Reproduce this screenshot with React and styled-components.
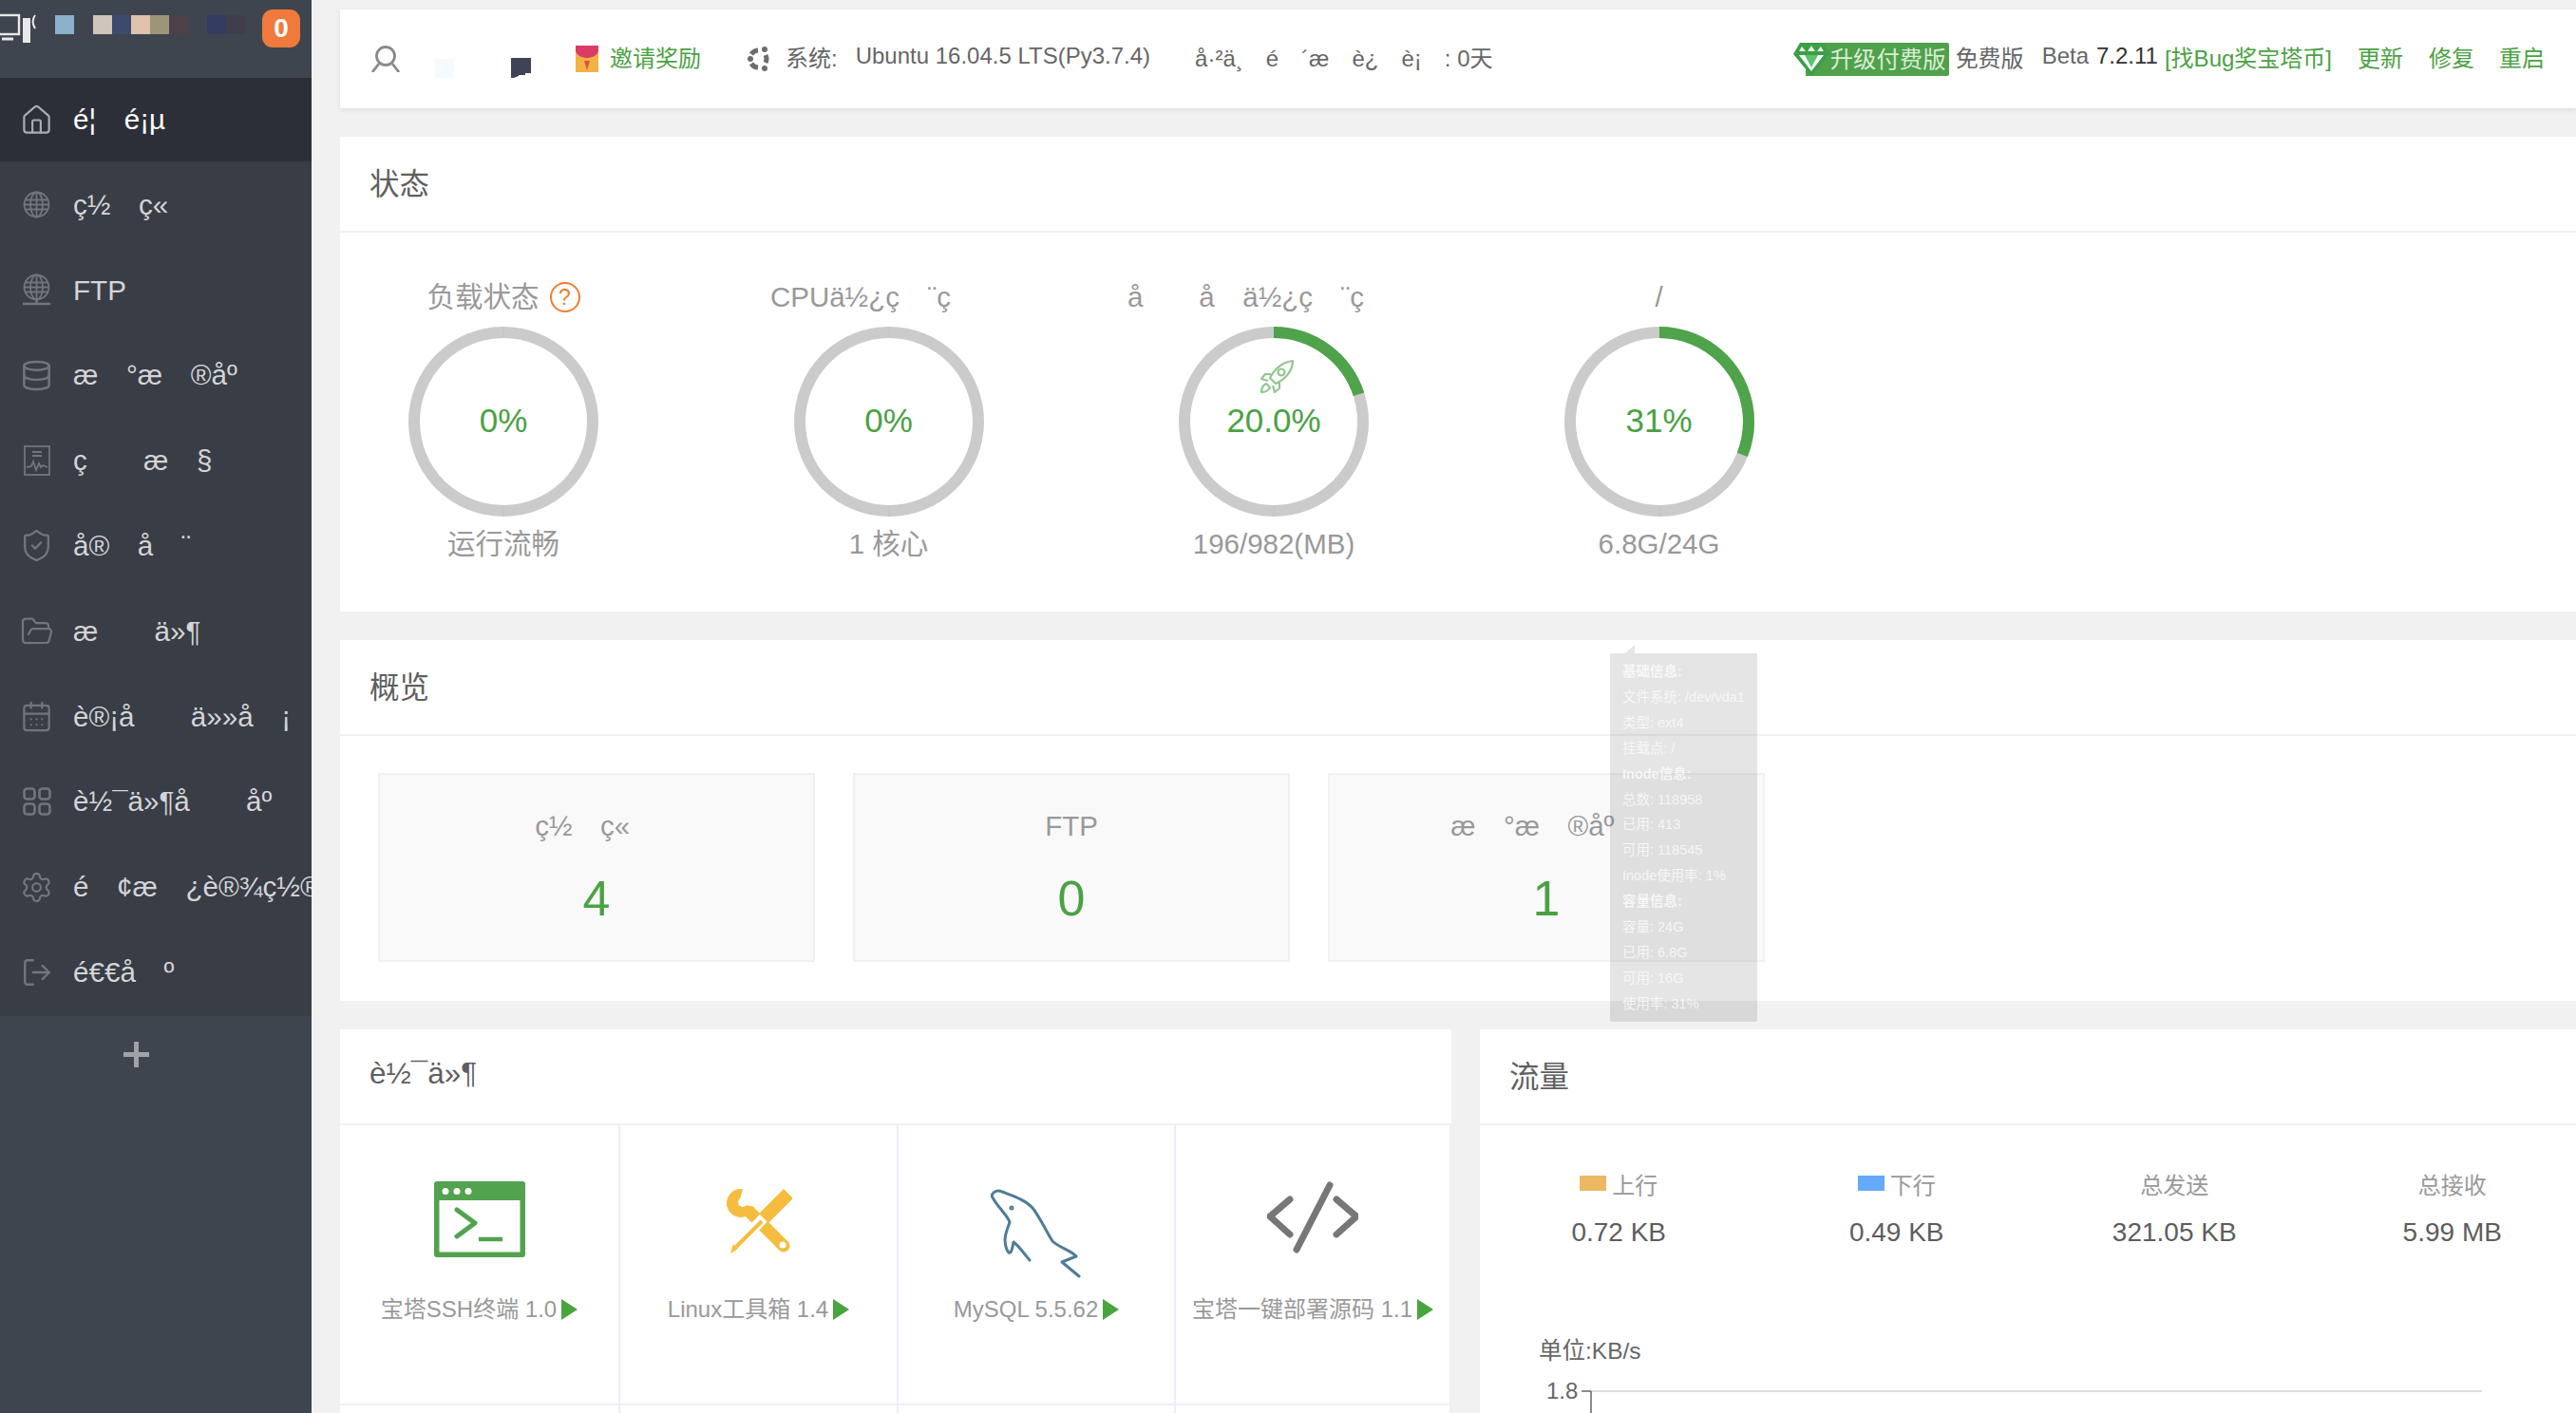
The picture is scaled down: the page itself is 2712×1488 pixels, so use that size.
import React from "react";
import styled, { createGlobalStyle } from "styled-components";
import { House, Database, ShieldCheck, FolderOpen, CalendarDays, Settings, LogOut } from "lucide-react";

const GlobalStyle = createGlobalStyle`
  html, body { margin: 0; padding: 0; width: 2712px; height: 1488px; overflow: hidden; background: #f1f1f1; }
  body { font-family: "Liberation Sans", "Noto Sans CJK SC", sans-serif; color: #666; }
  * { box-sizing: border-box; }
`;

const GREEN = "#4ba144";
const Page = styled.div`position: relative; display: flex; width: 2712px; height: 1488px; overflow: hidden;`;

/* sidebar */
const Sidebar = styled.aside`width: 328px; flex-shrink: 0; background: #383d46; display: flex; flex-direction: column; overflow: hidden;`;
const LogoBar = styled.div`height: 82px; background: #3f454e; display: flex; align-items: flex-start; position: relative;`;
const LogoSvg = styled.svg`width: 40px; height: 32px; margin-top: 14px; flex-shrink: 0;`;
const BlurRow = styled.div`display: flex; margin: 16px 0 0 18px; height: 20px;`;
const BlurCell = styled.span`width: 20px; height: 20px; background: ${p => p.$c};`;
const Badge = styled.span`
  position: absolute; left: 276px; top: 10px; width: 40px; height: 40px; border-radius: 11px;
  background: #ef7a3b; color: #fff; font-weight: 700; font-size: 28px;
  display: flex; align-items: center; justify-content: center;
`;
const MenuItem = styled.div`
  height: 88px; margin-bottom: 1.8px; display: flex; align-items: center; padding-left: 24px; white-space: nowrap;
  font-size: 29.6px; color: ${p => (p.$active ? "#fff" : "#d4d5d7")};
  background: ${p => (p.$active ? "#2c2f38" : "transparent")};
`;
const MenuIcon = styled.span`
  width: 29px; height: 30px; margin-right: 24px; flex-shrink: 0; display: flex; align-items: center; justify-content: center;
  color: ${p => (p.$active ? "#a9acb0" : "#71767c")};
  svg { flex-shrink: 0; }
`;
const AddRow = styled.div`flex: 1; background: #3f454e; display: flex; justify-content: center; padding-top: 27px;`;
const PlusMark = styled.span`
  position: relative; width: 27px; height: 27px; margin-right: 42px;
  &::before, &::after { content: ""; position: absolute; background: #a0a3a6; }
  &::before { left: 0; right: 0; top: 11px; height: 5px; }
  &::after { top: 0; bottom: 0; left: 11px; width: 5px; }
`;

/* main */
const Main = styled.main`flex: 1; min-width: 0; padding: 10px 0 0 30px; overflow: hidden;`;
const TopBar = styled.header`
  height: 104px; margin-bottom: 30px; background: #fff; box-shadow: 0 2px 5px rgba(0,0,0,.08);
  display: flex; align-items: center; justify-content: space-between; padding: 0 33px 0 32px;
  font-size: 24px; white-space: nowrap;
`;
const BarGroup = styled.div`display: flex; align-items: center;`;
const BarText = styled.span`margin: 0 0 6px ${p => p.$ml || 0}px; color: ${p => p.$c || "#666"};`;
const BarSvg = styled.svg`display: block; margin-left: ${p => p.$ml || 0}px; flex-shrink: 0;`;
const BlurSquare = styled.span`width: 20px; height: 20px; margin: 0 0 0 36px; background: #f5fbff; align-self: flex-end; transform: translateY(-1px);`;
const BlurTab = styled(BarSvg)`align-self: flex-end; transform: translateY(-1px);`;
const UpgradeBadge = styled.span`
  position: relative; display: block; width: 151px; height: 35px; margin-left: 13px; background: #4fa14b; border-radius: 0 2px 2px 0;
  color: #d9ecd6; font-size: 24.4px; line-height: 36px; padding-left: 26px;
`;
const Gem = styled.svg`position: absolute; left: -13px; top: -1px;`;

const Card = styled.section`background: #fff; margin-bottom: ${p => p.$mb ?? 30}px; height: ${p => p.$h}px; overflow: hidden;`;
const CardTitle = styled.div`
  height: 101px; padding: 0 0 6px 31px; display: flex; align-items: center; border-bottom: 2px solid #f1f1f1;
  font-size: 31.5px; color: #5f5f5f; white-space: nowrap;
`;

const Gauges = styled.div`display: flex; gap: 61.5px; padding-top: 50px;`;
const Gauge = styled.div`width: 344px; display: flex; flex-direction: column; align-items: center; color: #999; font-size: 29.5px; white-space: nowrap;`;
const GaugeLabel = styled.div`height: 36px; line-height: 36px; display: flex; align-items: center;`;
const Help = styled.span`
  width: 32px; height: 32px; margin-left: 11px; border: 2px solid #ef7d31; border-radius: 50%; color: #ef7d31;
  font-size: 23px; display: flex; align-items: center; justify-content: center;
`;
const RingWrap = styled.div`position: relative; width: 200px; height: 200px; margin: 13px 0 11px;`;
const RingValue = styled.div`
  position: absolute; left: 0; right: 0; top: 81px; text-align: center; line-height: 36px;
  font-size: 35px; color: ${GREEN};
`;
const RocketMark = styled.svg`position: absolute; left: 85px; top: 34px; opacity: .6;`;

const Stats = styled.div`display: flex; gap: 40px; padding: 39px 0 0 40px;`;
const StatBox = styled.div`
  width: 460px; height: 199px; flex-shrink: 0; background: #f9f9f9; border: 2px solid #f1f1f1;
  display: flex; flex-direction: column; align-items: center; padding-top: 36px; white-space: nowrap;
`;
const StatLabel = styled.div`font-size: 29.5px; line-height: 36px; color: #999;`;
const StatValue = styled.div`font-size: 52px; line-height: 60px; margin-top: 28px; color: ${GREEN};`;

const BottomRow = styled.div`display: flex; gap: 30px;`;
const SoftCard = styled(Card)`width: 1170px; flex-shrink: 0; height: 404px;`;
const TrafficCard = styled(Card)`width: 1170px; flex-shrink: 0; height: 404px;`;
const SoftGrid = styled.div`display: grid; grid-template-columns: 295px 293px 292px 290px;`;
const SoftCell = styled.div`
  height: 295px; padding-top: 59px; border-right: 2px solid #eeeefb; border-bottom: 2px solid #eeeefb;
  display: flex; flex-direction: column; align-items: center;
`;
const SoftIcon = styled.div`height: 120px; display: flex; align-items: flex-start; justify-content: center;`;
const IconSvg = styled.svg`margin-top: ${p => p.$top || 0}px; display: block;`;
const SoftName = styled.div`display: flex; align-items: center; font-size: 24px; line-height: 30px; color: #999; white-space: nowrap;`;
const PlayMark = styled.span`
  width: 0; height: 0; margin-left: 5px; border-left: 17px solid #48a53e;
  border-top: 11px solid transparent; border-bottom: 11px solid transparent;
`;

const FlowRow = styled.div`display: grid; grid-template-columns: repeat(4, 292.5px); padding-top: 46px;`;
const FlowCol = styled.div`display: flex; flex-direction: column; align-items: center; white-space: nowrap;`;
const FlowLabel = styled.div`display: flex; align-items: center; height: 30px; font-size: 24px; color: #999;`;
const Swatch = styled.span`width: 28px; height: 16px; margin-right: 6px; background: ${p => p.$c};`;
const FlowValue = styled.div`margin-top: 20px; font-size: 28px; line-height: 34px; color: #5d5d5d;`;
const ChartUnit = styled.div`margin: 93px 0 0 62px; font-size: 24.5px; line-height: 30px; color: #666;`;
const ChartSvg = styled.svg`display: block; margin-left: 62px;`;
const ChartText = styled.text`font-size: 24px; fill: #666; font-family: "Liberation Sans", sans-serif;`;

const Tip = styled.div`
  position: absolute; left: 1695px; top: 688px; width: 155px; height: 388px; padding: 6px 0 0 13px;
  background: rgba(0,0,0,.1); border-radius: 2px; font-size: 14.5px; line-height: 26.9px; color: rgba(255,255,255,.72); white-space: nowrap;
  &::before {
    content: ""; position: absolute; left: 16px; top: -9px; width: 0; height: 0;
    border-left: 10px solid transparent; border-bottom: 9px solid rgba(0,0,0,.1);
  }
`;
const TipLine = styled.div`font-weight: ${p => (p.$head ? 700 : 400)};`;

/* drawings */
const GlobeIcon = ({ base }) => (
  <svg width="29" height={base ? 36 : 30} viewBox={base ? "0 0 29 36" : "0 0 29 30"} fill="none" stroke="currentColor" strokeWidth="1.8">
    <circle cx="14.5" cy="14.5" r="13" />
    <ellipse cx="14.5" cy="14.5" rx="6.5" ry="13" />
    <path d="M14.5 1.5v26M2.5 9.5h24M1.5 14.5h26M2.5 19.5h24" />
    {base && <path d="M0 32h29M14.5 28v4" strokeWidth="2.6" />}
  </svg>
);
const MonitorIcon = () => (
  <svg width="28" height="32" viewBox="0 0 28 32" fill="none" stroke="currentColor" strokeWidth="1.8">
    <rect x="1" y="1" width="26" height="30" />
    <path d="M9 7h10M9 11h10" />
    <path d="M3 23l5-1 2-5 3 9 3-7 2 4 2-2 5 2" />
  </svg>
);
const AppsIcon = () => (
  <svg width="30" height="30" viewBox="0 0 30 30" fill="none" stroke="currentColor" strokeWidth="2.6">
    <rect x="1.5" y="1.5" width="11" height="11" rx="3" />
    <rect x="17.5" y="1.5" width="11" height="11" rx="3" />
    <rect x="1.5" y="17.5" width="11" height="11" rx="3" />
    <rect x="17.5" y="17.5" width="11" height="11" rx="3" />
  </svg>
);

const Ring = ({ pct }) => {
  const r = 94;
  const len = 2 * Math.PI * r;
  return (
    <svg width="200" height="200" viewBox="0 0 200 200">
      <circle cx="100" cy="100" r={r} fill="none" stroke="#cbcbcb" strokeWidth="12" />
      <circle cx="100" cy="100" r={r} fill="none" stroke="#4fa34a" strokeWidth="12"
        strokeDasharray={`${(len * pct) / 100} ${len}`} transform="rotate(-90 100 100)" />
      <path d="M100 188v12" stroke="#bcc8bc" strokeWidth="1" />
      {pct === 0 && <path d="M100 0v12" stroke="#bcc8bc" strokeWidth="1" />}
    </svg>
  );
};

const RocketIcon = () => (
  <RocketMark width="37" height="37" viewBox="0 0 37 37" fill="none" stroke="#4ba144" strokeWidth="2.2" strokeLinejoin="round">
    <path d="M35 2C25 3 16 10 11 20l6 6c11-5 18-14 18-24z" />
    <circle cx="23" cy="14" r="3.500" />
    <path d="M12 16l-6 0-4 5 7 2M21 25l0 6-5 4-2-7" />
    <path d="M7 26c-4 2-5 6-5 9 4 0 8-2 9-5z" />
  </RocketMark>
);

const TerminalIcon = () => (
  <IconSvg width="96" height="80" viewBox="0 0 96 80">
    <rect width="96" height="80" rx="3" fill="#52a24e" />
    <rect x="5.5" y="20" width="85" height="54.500" fill="#fff" />
    <circle cx="12" cy="10.500" r="3.500" fill="#fff" />
    <circle cx="24" cy="10.500" r="3.500" fill="#fff" />
    <circle cx="36" cy="10.500" r="3.500" fill="#fff" />
    <path d="M24 30l19 14-19 14" fill="none" stroke="#52a24e" strokeWidth="5" strokeLinecap="round" strokeLinejoin="round" />
    <path d="M47 61h25" stroke="#52a24e" strokeWidth="4.500" />
  </IconSvg>
);
const ToolsIcon = () => (
  <IconSvg $top={6} width="70" height="72" viewBox="0 0 70 72">
    <path d="M24 25l37 37" stroke="#f5bd3f" strokeWidth="13" strokeLinecap="round" />
    <circle cx="16" cy="17" r="15" fill="#f5bd3f" />
    <path d="M14 17L19 -2 40 0 34 22z" fill="#fff" />
    <circle cx="18" cy="16" r="5" fill="#fff" />
    <circle cx="60" cy="61" r="3.500" fill="#fff" />
    <path d="M6 69L44 28" stroke="#fff" strokeWidth="11" />
    <path d="M40 33L66 7" stroke="#f5bd3f" strokeWidth="14" />
    <path d="M36 32l6 6" stroke="#fff" strokeWidth="2" />
    <path d="M38 36L11 63" stroke="#f5bd3f" strokeWidth="4" />
    <path d="M5 70l3-10 5 5z" fill="#f5bd3f" />
  </IconSvg>
);
const DolphinIcon = () => (
  <IconSvg $top={8} width="96" height="96" viewBox="0 0 96 96" fill="none" stroke="#4f7c97" strokeWidth="3" strokeLinejoin="round" strokeLinecap="round">
    <path d="M1 7C3 2 8 1 12 3C25 8 37 12 44 20C52 30 58 44 65 55C72 62 84 64 90 71L75 77L93 92" />
    <path d="M1 7C6 18 18 28 20 35C18 42 12 52 17 64C20 70 22 68 24 56C32 62 36 70 41 75" />
    <circle cx="22" cy="20" r="1" />
  </IconSvg>
);
const CodeIcon = () => (
  <IconSvg width="96" height="76" viewBox="0 0 96 76" fill="none" stroke="#777" strokeWidth="7" strokeLinecap="round" strokeLinejoin="round">
    <path d="M24 19L3 37l21 19M73 19l21 18-21 19M66 4L31 72" />
  </IconSvg>
);

const menu = [
  { icon: <House size={35} strokeWidth={1.5} />, text: "é¦\u2003é¡µ" },
  { icon: <GlobeIcon />, text: "ç½\u2003ç«" },
  { icon: <GlobeIcon base />, text: "FTP" },
  { icon: <Database size={35} strokeWidth={1.7} />, text: "æ\u2003°æ\u2003®åº\u2003" },
  { icon: <MonitorIcon />, text: "ç\u2003\u2003æ\u2003§" },
  { icon: <ShieldCheck size={37} strokeWidth={1.5} />, text: "å®\u2003å\u2003¨" },
  { icon: <FolderOpen size={36} strokeWidth={1.5} />, text: "æ\u2003\u2003ä»¶" },
  { icon: <CalendarDays size={35} strokeWidth={1.5} />, text: "è®¡å\u2003\u2003ä»»å\u2003¡" },
  { icon: <AppsIcon />, text: "è½¯ä»¶å\u2003\u2003åº\u2003" },
  { icon: <Settings size={35} strokeWidth={1.5} />, text: "é\u2003¢æ\u2003¿è®¾ç½®" },
  { icon: <LogOut size={34} strokeWidth={1.7} />, text: "é€€å\u2003º" },
];

const blurCells = ["#8ab0cc", "transparent", "#cfc5bb", "#3d4a6e", "#dfc3ad", "#9c9579", "#4d4148", "transparent", "#343c62", "#403e4b"];

const gauges = [
  { title: "负载状态", help: true, pct: 0, value: "0%", sub: "运行流畅" },
  { title: "CPUä½¿ç\u2003¨ç\u2003\u2003", pct: 0, value: "0%", sub: "1 核心" },
  { title: "å\u2003\u2003å\u2003ä½¿ç\u2003¨ç\u2003\u2003", pct: 20, value: "20.0%", sub: "196/982(MB)", rocket: true },
  { title: "/", pct: 31, value: "31%", sub: "6.8G/24G" },
];

const overview = [
  { label: "ç½\u2003ç«\u2003", value: 4 },
  { label: "FTP", value: 0 },
  { label: "æ\u2003°æ\u2003®åº\u2003", value: 1 },
];

const software = [
  { icon: <TerminalIcon />, name: "宝塔SSH终端 1.0" },
  { icon: <ToolsIcon />, name: "Linux工具箱 1.4" },
  { icon: <DolphinIcon />, name: "MySQL 5.5.62" },
  { icon: <CodeIcon />, name: "宝塔一键部署源码 1.1" },
];

const flow = [
  { label: "上行", color: "#edb863", value: "0.72 KB" },
  { label: "下行", color: "#66a8fa", value: "0.49 KB" },
  { label: "总发送", value: "321.05 KB" },
  { label: "总接收", value: "5.99 MB" },
];

const tipLines = [
  { t: "基础信息:", head: true },
  { t: "文件系统: /dev/vda1" },
  { t: "类型: ext4" },
  { t: "挂载点: /" },
  { t: "Inode信息:", head: true },
  { t: "总数: 118958" },
  { t: "已用: 413" },
  { t: "可用: 118545" },
  { t: "Inode使用率: 1%" },
  { t: "容量信息:", head: true },
  { t: "容量: 24G" },
  { t: "已用: 6.8G" },
  { t: "可用: 16G" },
  { t: "使用率: 31%" },
];

export default function App() {
  return (
    <Page>
      <GlobalStyle />
      <Sidebar>
        <LogoBar>
          <LogoSvg viewBox="0 0 40 32" fill="none" stroke="#e8e8e8" strokeWidth="2.4">
            <rect x="-3" y="2" width="23" height="20" />
            <path d="M2 27h12" strokeWidth="3" />
            <rect x="24" y="5" width="8" height="26" fill="#e8e8e8" stroke="none" />
            <path d="M37 2c-3 4-3 9 0 14" strokeWidth="2" />
          </LogoSvg>
          <BlurRow>
            {blurCells.map((c, i) => <BlurCell key={i} $c={c} />)}
          </BlurRow>
          <Badge>0</Badge>
        </LogoBar>
        {menu.map((m, i) => (
          <MenuItem key={i} $active={i === 0}>
            <MenuIcon $active={i === 0}>{m.icon}</MenuIcon>
            {m.text}
          </MenuItem>
        ))}
        <AddRow><PlusMark /></AddRow>
      </Sidebar>

      <Main>
        <TopBar>
          <BarGroup>
            <BarSvg width="32" height="28" viewBox="0 0 32 28" fill="none" stroke="#8a8a8a" strokeWidth="2.8">
              <circle cx="16" cy="11" r="9.500" />
              <path d="M9 19L2 28M23 19l7 9" />
            </BarSvg>
            <BlurSquare />
            <BlurTab $ml={60} width="21" height="21" viewBox="0 0 21 21">
              <path d="M0 0h21v16h-6v2H8v1L3 21H0z" fill="#404258" />
            </BlurTab>
            <BarSvg $ml={47} width="24" height="28" viewBox="0 0 24 28">
              <rect width="24" height="28" fill="#f2b344" />
              <path d="M0 0h24v6C22 11 17 13 12 13S2 11 0 6z" fill="#dc3b68" />
              <path d="M9 16h6l-3 10z" fill="#e0523f" />
            </BarSvg>
            <BarText $ml={12} $c={GREEN}>邀请奖励</BarText>
            <BarSvg $ml={48} width="26" height="28" viewBox="0 0 26 28" fill="none" stroke="#6c6c6c" strokeWidth="5">
              <path d="M12 5a9 9 0 0 0-7 4M5 19a9 9 0 0 0 7 4M20 18a9 9 0 0 0 0-8" />
              <circle cx="4" cy="14" r="3" fill="#6c6c6c" stroke="none" />
              <circle cx="19" cy="4" r="3" fill="#6c6c6c" stroke="none" />
              <circle cx="19" cy="24" r="3" fill="#6c6c6c" stroke="none" />
            </BarSvg>
            <BarText $ml={15}>系统:</BarText>
            <BarText $ml={19}>Ubuntu 16.04.5 LTS(Py3.7.4)</BarText>
            <BarText $ml={47}>å·²ä¸{"\u2003"}é{"\u2003"}´æ{"\u2003"}è¿{"\u2003"}è¡{"\u2003"}: 0天</BarText>
          </BarGroup>
          <BarGroup>
            <UpgradeBadge>
              <Gem width="38" height="37" viewBox="0 0 38 37">
                <path d="M7 1h24l7 12-19 23L0 13z" fill="#3d9f49" />
                <path d="M9 5l4 5H6zM19 4l4 6h-8zM29 5l3 5h-7z" fill="#e6f5e4" />
                <path d="M6 14h26L19 31z" fill="#fff" />
                <path d="M12 14h14l-7 13z" fill="#5cc46a" />
              </Gem>
              升级付费版
            </UpgradeBadge>
            <BarText $ml={7}>免费版</BarText>
            <BarText $ml={19}>Beta</BarText>
            <BarText $ml={8} $c="#333">7.2.11</BarText>
            <BarText $ml={7} $c={GREEN}>[找Bug奖宝塔币]</BarText>
            <BarText $ml={27} $c={GREEN}>更新</BarText>
            <BarText $ml={27} $c={GREEN}>修复</BarText>
            <BarText $ml={26} $c={GREEN}>重启</BarText>
          </BarGroup>
        </TopBar>

        <Card $h={500}>
          <CardTitle>状态</CardTitle>
          <Gauges>
            {gauges.map((g, i) => (
              <Gauge key={i}>
                <GaugeLabel>{g.title}{g.help && <Help>?</Help>}</GaugeLabel>
                <RingWrap>
                  <Ring pct={g.pct} />
                  {g.rocket && <RocketIcon />}
                  <RingValue>{g.value}</RingValue>
                </RingWrap>
                <GaugeLabel>{g.sub}</GaugeLabel>
              </Gauge>
            ))}
          </Gauges>
        </Card>

        <Card $h={380}>
          <CardTitle>概览</CardTitle>
          <Stats>
            {overview.map((o, i) => (
              <StatBox key={i}>
                <StatLabel>{o.label}</StatLabel>
                <StatValue>{o.value}</StatValue>
              </StatBox>
            ))}
          </Stats>
        </Card>

        <BottomRow>
          <SoftCard $mb={0}>
            <CardTitle>è½¯ä»¶</CardTitle>
            <SoftGrid>
              {software.map((s, i) => (
                <SoftCell key={i}>
                  <SoftIcon>{s.icon}</SoftIcon>
                  <SoftName>{s.name}<PlayMark /></SoftName>
                </SoftCell>
              ))}
              {software.map((s, i) => <SoftCell key={i} />)}
            </SoftGrid>
          </SoftCard>
          <TrafficCard $mb={0}>
            <CardTitle>流量</CardTitle>
            <FlowRow>
              {flow.map((f, i) => (
                <FlowCol key={i}>
                  <FlowLabel>{f.color && <Swatch $c={f.color} />}{f.label}</FlowLabel>
                  <FlowValue>{f.value}</FlowValue>
                </FlowCol>
              ))}
            </FlowRow>
            <ChartUnit>单位:KB/s</ChartUnit>
            <ChartSvg width="1000" height="60" viewBox="0 0 1000 60">
              <ChartText x="8" y="35">1.8</ChartText>
              <path d="M55 27h938" stroke="#ddd" strokeWidth="2" />
              <path d="M45 27h10M55 27v33" stroke="#666" strokeWidth="1.500" fill="none" />
            </ChartSvg>
          </TrafficCard>
        </BottomRow>
      </Main>

      <Tip>
        {tipLines.map((l, i) => <TipLine key={i} $head={l.head}>{l.t}</TipLine>)}
      </Tip>
    </Page>
  );
}
